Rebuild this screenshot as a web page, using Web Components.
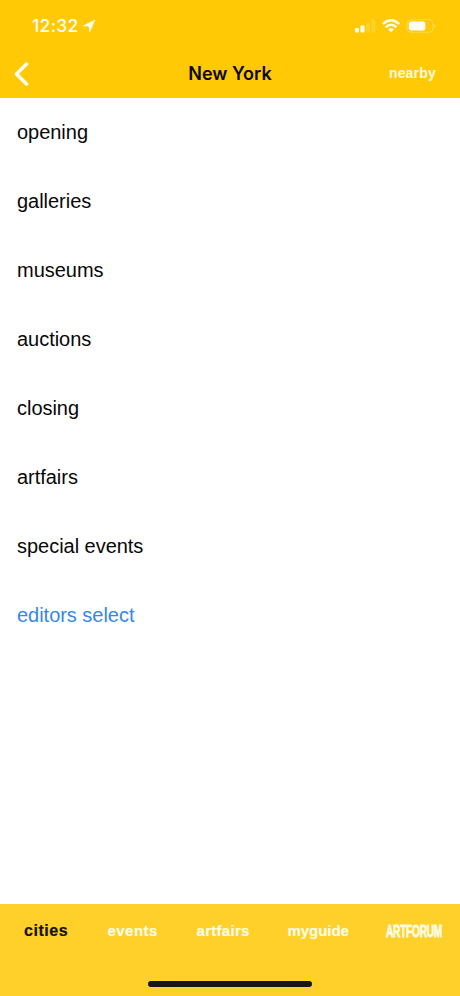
<!DOCTYPE html>
<html lang="en"><head><meta charset="utf-8"><title>New York</title>
<style>html,body{margin:0;height:100%;overflow:hidden;background:#fff}</style></head>
<body><city-app></city-app>
<script>
const define=(name,html)=>customElements.define(name,class extends HTMLElement{
  constructor(){super();const t=document.createElement('template');t.innerHTML=html;
    this.attachShadow({mode:'open'}).append(t.content.cloneNode(true));}
});
define('status-bar',`<style>
:host{display:flex;height:50px;box-sizing:border-box;padding:2px 24px 0 32px;align-items:center;color:#fffef0;font:500 17.5px/20px Inter,sans-serif}
time{width:47px;letter-spacing:.3px;white-space:nowrap}svg{display:block}.loc{margin:0 auto 0 3px}.signals{margin-top:-1px}
</style><time>12:32</time>
<svg class="loc" width="14" height="14" viewBox="0 0 14 14"><path fill="currentColor" stroke="currentColor" stroke-width=".6" stroke-linejoin="round" d="M12.9 1 7.7 12.8 7 7.1 1 7Z"/></svg>
<svg class="signals" width="82" height="18" viewBox="0 0 82 18" fill="currentColor">
<rect x="1" y="11" width="4" height="4.5" rx="1"/><rect x="6.5" y="8.5" width="4" height="7" rx="1"/>
<g opacity=".16"><rect x="12" y="5.5" width="4" height="10" rx="1"/><rect x="17.5" y="2.5" width="4" height="13" rx="1"/></g>
<g fill="none" stroke="currentColor" stroke-width="2.4"><path d="M28.8 7.2Q37 -.8 45.2 7.2"/><path d="M31.7 10.3Q37 5.3 42.3 10.3"/></g>
<path d="M34.2 12.3Q37 10 39.8 12.3L37 15.4Z"/>
<rect x="53" y="2.7" width="26" height="12.6" rx="4" fill="none" stroke="currentColor" opacity=".3"/><rect x="54.8" y="4.5" width="16.5" height="9" rx="2.2"/><path d="M80.3 7q2 2 0 4Z" opacity=".45"/>
</svg>`);
define('nav-bar',`<style>
:host{display:grid;grid-template-columns:1fr auto 1fr;align-items:center;height:48px;padding:0 24px 0 14px}
svg{display:block}h1{margin:0;color:#0b0903;font:600 18px/24px Inter,sans-serif;letter-spacing:0;transform:translateX(5px)}
span{justify-self:end;color:#fffbe0;font:bold 14px/20px "Liberation Sans",sans-serif;letter-spacing:.2px;padding-bottom:2px}
</style><svg width="16" height="24" viewBox="0 0 16 24"><path d="M12.5 2 2.5 12l10 10" fill="none" stroke="#fffef5" stroke-width="3.5" stroke-linecap="round" stroke-linejoin="round"/></svg>
<h1><slot></slot></h1><span>nearby</span>`);
define('list-item',`<style>
:host{display:flex;align-items:center;height:69px;padding-left:17px;color:#080808;font:20px/24px "Liberation Sans",sans-serif;letter-spacing:-.03px}
:host([featured]){color:#3488e8}
</style><slot></slot>`);
define('tab-item',`<style>
:host{display:block;color:#fffde6;font:bold 15px/20px "Liberation Sans",sans-serif;letter-spacing:var(--track,0);white-space:nowrap;-webkit-text-stroke:.2px}
:host([active]){color:#151103;font-size:16px}
:host([brand]) span{display:inline-block;font-size:17px;letter-spacing:-.5px;transform-origin:0 50%;transform:translateY(1px) scaleX(.6);-webkit-text-stroke:.8px}
</style><span><slot></slot></span>`);
define('tab-bar',`<style>
:host{display:flex;flex-direction:column;justify-content:space-between;height:92.5px;box-sizing:border-box;padding:17.5px 0 9.5px;background:#ffcf2a}
nav{display:grid;grid-template-columns:83.5px 89px 91px 98px 1fr;padding-left:24px;height:20px}
i{width:164px;height:5.5px;border-radius:3px;background:#17171a;align-self:center}
</style><nav><slot></slot></nav><i></i>`);
define('city-app',`<style>
:host{display:flex;flex-direction:column;height:100vh}
header{height:98px;background:#ffca05}main{flex:1;margin-top:-1px}
</style><header><status-bar></status-bar><nav-bar>New York</nav-bar></header>
<main><list-item>opening</list-item><list-item>galleries</list-item><list-item>museums</list-item><list-item>auctions</list-item><list-item>closing</list-item><list-item>artfairs</list-item><list-item>special events</list-item><list-item featured>editors select</list-item></main>
<tab-bar><tab-item active style="--track:.55px">cities</tab-item><tab-item style="--track:.45px">events</tab-item><tab-item style="--track:.3px">artfairs</tab-item><tab-item style="--track:-.05px">myguide</tab-item><tab-item brand>ARTFORUM</tab-item></tab-bar>`);
</script></body></html>
